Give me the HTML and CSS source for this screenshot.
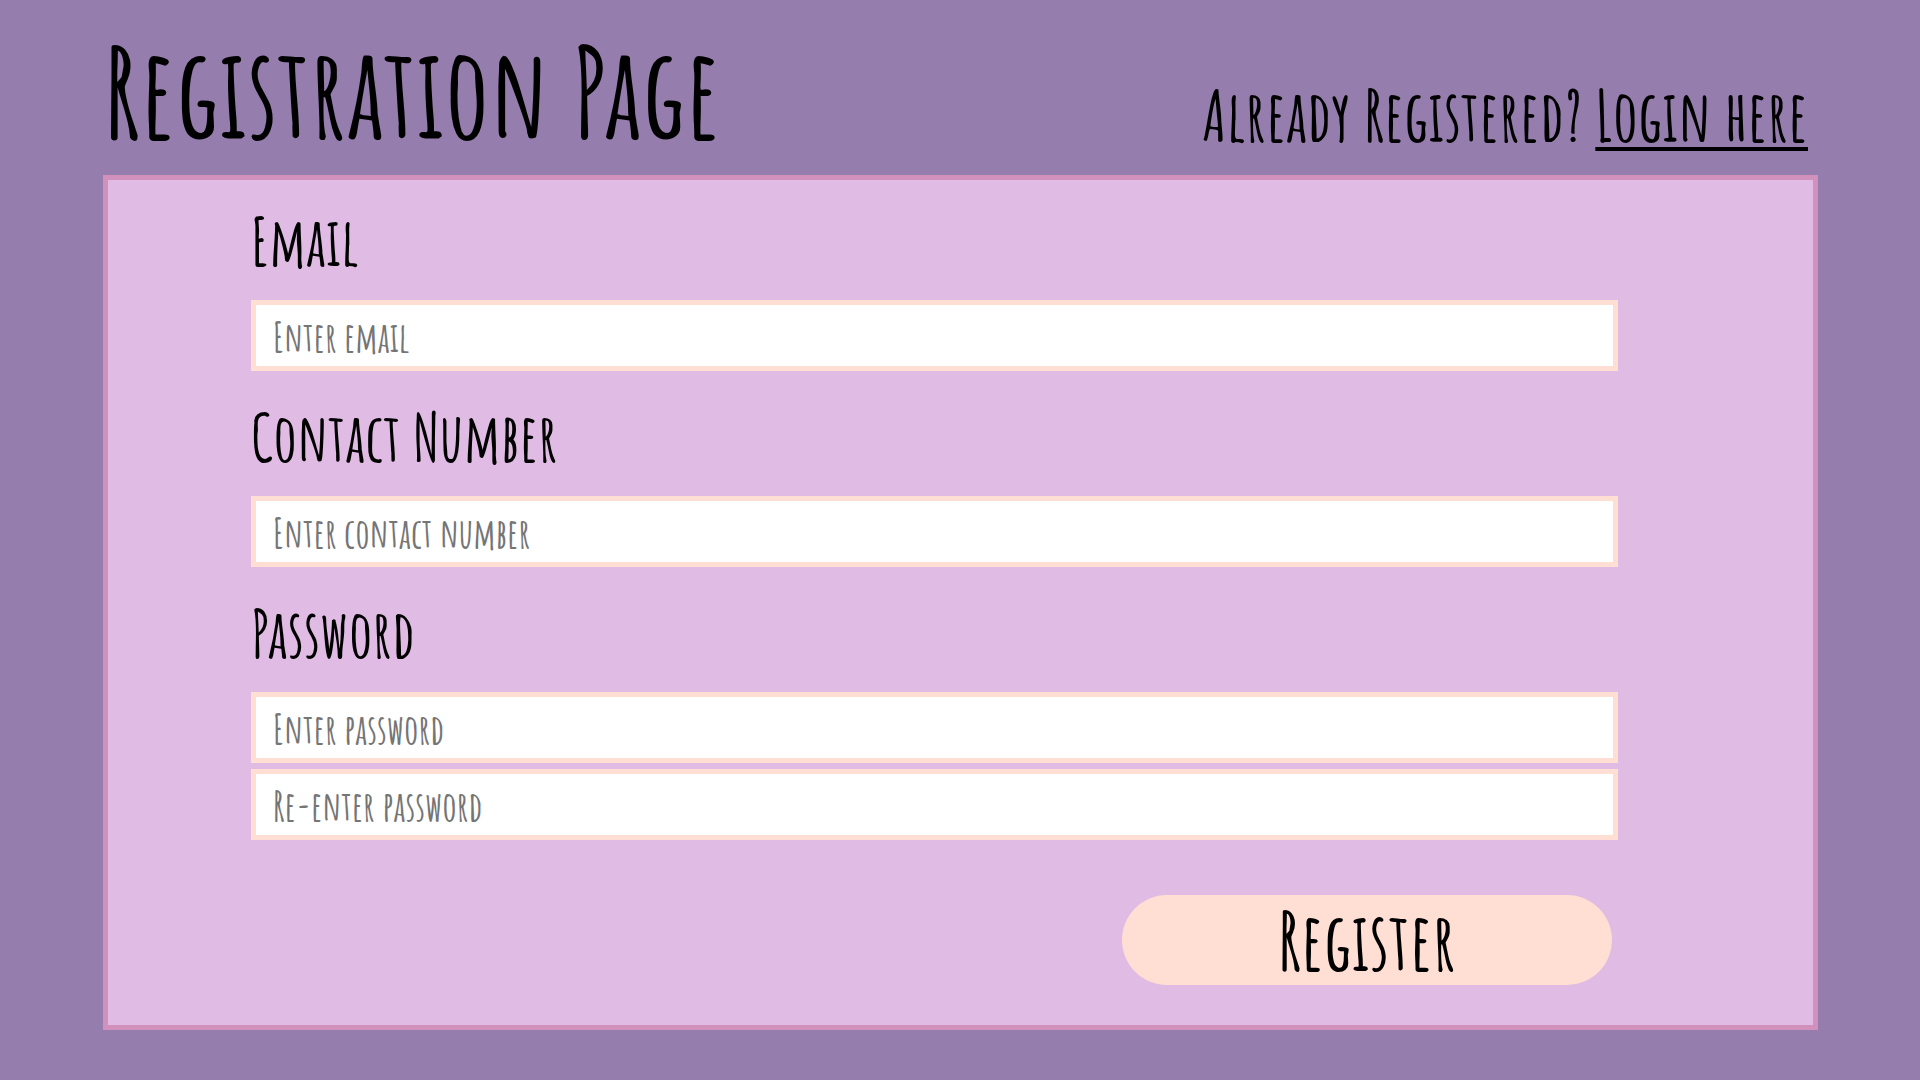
FILE: index.html
```
<!DOCTYPE html>
<html lang="en">
<head>
<meta charset="utf-8">
<meta name="viewport" content="width=device-width, initial-scale=1">
<title>Registration Page</title>
<link rel="stylesheet" href="styles.css">
</head>
<body>
<header class="header">
  <h1 class="title">Registration Page</h1>
  <p class="login">Already Registered? <a class="login-link" href="#login">Login here</a></p>
</header>
<main class="panel">
  <form class="form">
    <div class="field">
      <label class="label" for="email">Email</label>
      <input class="input" id="email" type="email" placeholder="Enter email">
    </div>
    <div class="field">
      <label class="label" for="contact">Contact Number</label>
      <input class="input" id="contact" type="tel" placeholder="Enter contact number">
    </div>
    <div class="field">
      <label class="label" for="password">Password</label>
      <input class="input" id="password" type="password" placeholder="Enter password">
      <input class="input" type="password" aria-label="Re-enter password" placeholder="Re-enter password">
    </div>
    <button class="register" type="submit">Register</button>
  </form>
</main>
</body>
</html>
```
FILE: styles.css
```
* {
  box-sizing: border-box;
}

body {
  margin: 0;
  padding: 0 102px 50px 103px;
  background: #957dad;
  color: #000;
  font-family: "Amatic SC", "Liberation Sans Narrow", "Liberation Sans", sans-serif;
  font-weight: 700;
}

.header {
  display: flex;
  justify-content: space-between;
  align-items: flex-end;
  padding: 31px 10px 24px 1px;
}

.title {
  margin: 0;
  font-size: 125px;
  line-height: 120px;
}

.login {
  margin: 0;
  font-size: 70px;
  line-height: 72px;
}

.login-link {
  color: inherit;
  text-decoration-thickness: 4px;
  text-underline-offset: 5px;
}

.panel {
  padding: 30px 195px 40px 143px;
  background: #e0bbe4;
  border: 5px solid #d291bc;
}

.form {
  display: flex;
  flex-direction: column;
  gap: 35px;
}

.field {
  display: flex;
  flex-direction: column;
  gap: 6px;
}

.label {
  padding-bottom: 22px;
  font-size: 66px;
  line-height: 62px;
}

.input {
  width: 100%;
  height: 71px;
  padding: 2px 17px 0;
  background: #fff;
  border: 5px solid #ffdfd3;
  border-radius: 0;
  font: inherit;
  font-size: 40px;
}

.input::placeholder {
  color: #757575;
}

.register {
  align-self: flex-end;
  width: 490px;
  height: 90px;
  margin: 20px 6px 0 0;
  padding: 2px 0 0;
  background: #ffdfd3;
  border: 0;
  border-radius: 45px;
  color: #000;
  font: inherit;
  font-size: 80px;
  line-height: 88px;
}
```
